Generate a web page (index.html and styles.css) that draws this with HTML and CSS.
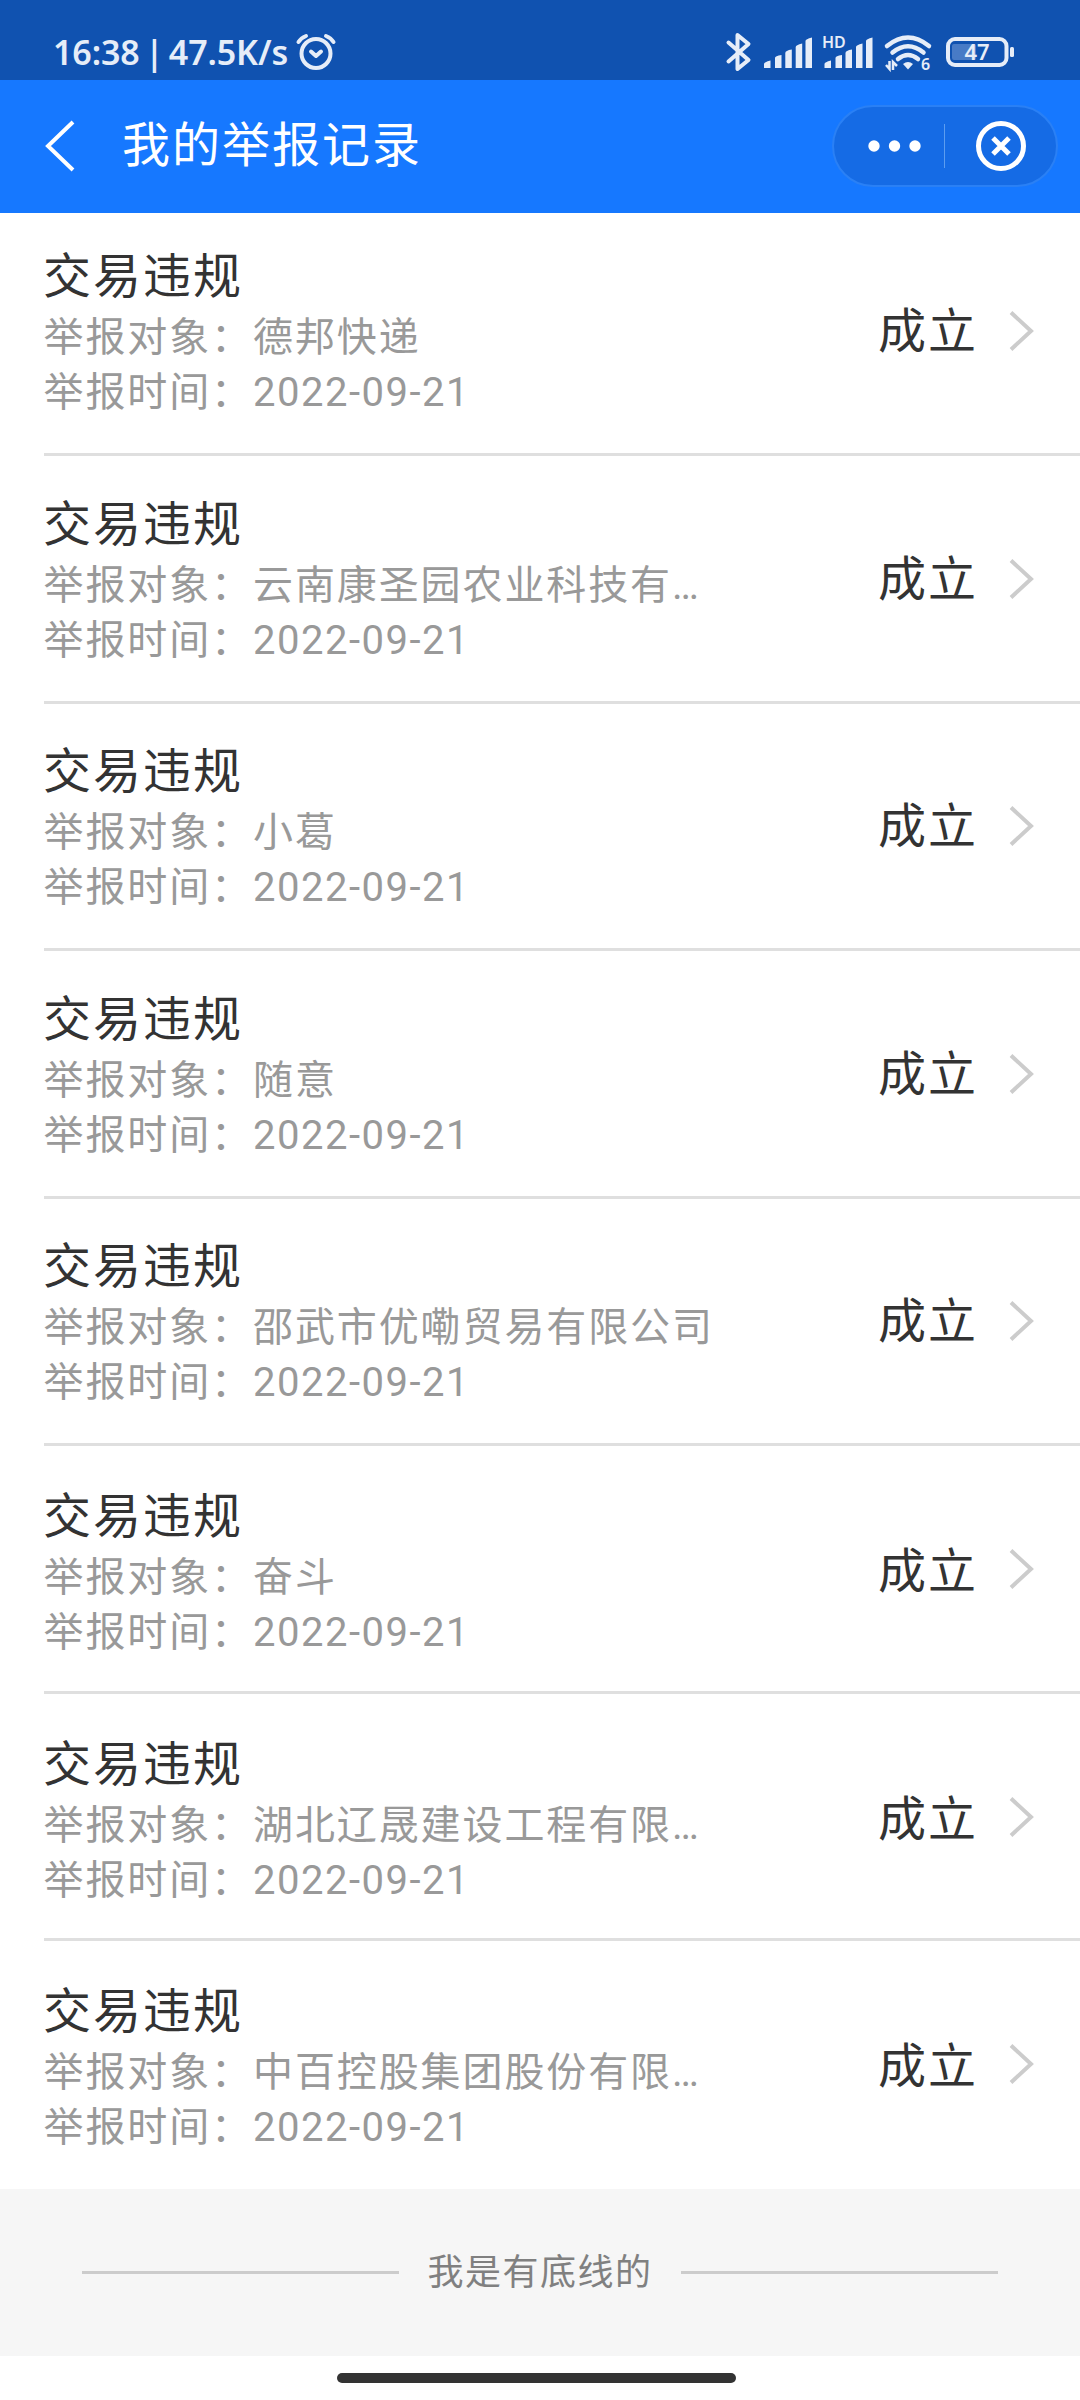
FILE: index.html
```html
<!DOCTYPE html>
<html lang="zh-CN">
<head>
    <meta charset="UTF-8">
    <meta name="viewport" content="width=device-width, initial-scale=1.0">
    <title>我的举报记录</title>
    <link rel="stylesheet" href="styles.css">
</head>
<body>
    <div class="status-bar">
        <span class="clock">16:38 | 47.5K/s</span>
        <svg class="alarm" width="40" height="38" viewBox="0 0 40 38">
            <circle cx="20" cy="20.5" r="14.5"/>
            <path d="M2.5 9 Q5 5 10 3M30 3 Q35 5 37.500 9M15 18.500l5 4.500 5-4.500"/>
        </svg>
        <div class="status-icons">
            <svg class="bluetooth" width="25" height="40" viewBox="0 0 25 40">
                <path d="M2.500 10.500L22.500 28 11.500 37V3L22.500 12 2.500 29.500"/>
            </svg>
            <svg class="signal" width="48" height="32" viewBox="0 0 48 32">
                <path d="M0 31V27Q0 25 6.500 23.500V31zM11 31V21Q11 19 17.500 18V31zM21.300 31V16Q21.300 13.500 27.800 12.500V31zM31.700 31V10Q31.700 8 38.200 6.500V31zM41.500 31V4Q41.500 2 48 .5V31z"/>
            </svg>
            <svg class="signal signal-hd" width="51" height="34" viewBox="0 0 51 34">
                <text x="0" y="13">HD</text>
                <path d="M2.500 33V29Q2.500 27 9 25.500V33zM13.500 33V23Q13.500 21 20 20V33zM23.500 33V18Q23.500 15.500 30 14.500V33zM34 33V12Q34 10 40.500 8.500V33zM44 33V6Q44 4 50.500 2.500V33z"/>
            </svg>
            <svg class="wifi" width="48" height="38" viewBox="0 0 48 38">
                <path class="arc" d="M3 12Q24-5 45 12M8.500 18.500Q24 6 39.500 18.500M14 25Q24 17 34 25"/>
                <path d="M19 30q5-4 10 0l-5 5.500z"/>
                <path class="arrows" d="M2 31l3.500 4V27M9 36V28l4 4"/>
                <text x="37" y="35.500">6</text>
            </svg>
            <svg class="battery" width="68" height="30" viewBox="0 0 68 30">
                <rect class="charge" x="6" y="7" width="24" height="16" rx="2"/>
                <rect class="case" x="2" y="2" width="58.500" height="26" rx="7"/>
                <rect x="64" y="10" width="4" height="10" rx="1.500"/>
                <text x="18.500" y="23.300">47</text>
            </svg>
        </div>
    </div>

    <div class="nav">
        <svg class="back" width="32" height="50" viewBox="0 0 32 50">
            <path d="M29 1L4 25 29 49"/>
        </svg>
        <h1>我的举报记录</h1>
        <div class="capsule">
            <svg class="more" width="54" height="12" viewBox="0 0 54 12">
                <circle cx="6" cy="6" r="5.700"/>
                <circle cx="26.500" cy="6" r="5.700"/>
                <circle cx="47" cy="6" r="5.700"/>
            </svg>
            <span class="split"></span>
            <svg class="close" width="50" height="50" viewBox="0 0 50 50">
                <circle cx="25" cy="25" r="22.500"/>
                <path d="M17 17l16 16M33 17L17 33"/>
            </svg>
        </div>
    </div>

    <div class="records">
        <div class="record">
            <div class="info">
                <h2>交易违规</h2>
                <p>举报对象：德邦快递</p>
                <p>举报时间：<span class="date">2022-09-21</span></p>
            </div>
            <span class="state">成立</span>
            <svg class="arrow" width="26" height="42" viewBox="0 0 26 42"><path d="M2 2.500L22 21 2 39.500"/></svg>
        </div>
        <div class="record">
            <div class="info">
                <h2>交易违规</h2>
                <p>举报对象：云南康圣园农业科技有…</p>
                <p>举报时间：<span class="date">2022-09-21</span></p>
            </div>
            <span class="state">成立</span>
            <svg class="arrow" width="26" height="42" viewBox="0 0 26 42"><path d="M2 2.500L22 21 2 39.500"/></svg>
        </div>
        <div class="record">
            <div class="info">
                <h2>交易违规</h2>
                <p>举报对象：小葛</p>
                <p>举报时间：<span class="date">2022-09-21</span></p>
            </div>
            <span class="state">成立</span>
            <svg class="arrow" width="26" height="42" viewBox="0 0 26 42"><path d="M2 2.500L22 21 2 39.500"/></svg>
        </div>
        <div class="record">
            <div class="info">
                <h2>交易违规</h2>
                <p>举报对象：随意</p>
                <p>举报时间：<span class="date">2022-09-21</span></p>
            </div>
            <span class="state">成立</span>
            <svg class="arrow" width="26" height="42" viewBox="0 0 26 42"><path d="M2 2.500L22 21 2 39.500"/></svg>
        </div>
        <div class="record">
            <div class="info">
                <h2>交易违规</h2>
                <p>举报对象：邵武市优嘞贸易有限公司</p>
                <p>举报时间：<span class="date">2022-09-21</span></p>
            </div>
            <span class="state">成立</span>
            <svg class="arrow" width="26" height="42" viewBox="0 0 26 42"><path d="M2 2.500L22 21 2 39.500"/></svg>
        </div>
        <div class="record">
            <div class="info">
                <h2>交易违规</h2>
                <p>举报对象：奋斗</p>
                <p>举报时间：<span class="date">2022-09-21</span></p>
            </div>
            <span class="state">成立</span>
            <svg class="arrow" width="26" height="42" viewBox="0 0 26 42"><path d="M2 2.500L22 21 2 39.500"/></svg>
        </div>
        <div class="record">
            <div class="info">
                <h2>交易违规</h2>
                <p>举报对象：湖北辽晟建设工程有限…</p>
                <p>举报时间：<span class="date">2022-09-21</span></p>
            </div>
            <span class="state">成立</span>
            <svg class="arrow" width="26" height="42" viewBox="0 0 26 42"><path d="M2 2.500L22 21 2 39.500"/></svg>
        </div>
        <div class="record">
            <div class="info">
                <h2>交易违规</h2>
                <p>举报对象：中百控股集团股份有限…</p>
                <p>举报时间：<span class="date">2022-09-21</span></p>
            </div>
            <span class="state">成立</span>
            <svg class="arrow" width="26" height="42" viewBox="0 0 26 42"><path d="M2 2.500L22 21 2 39.500"/></svg>
        </div>
    </div>

    <div class="list-end"><span>我是有底线的</span></div>
    <div class="home-bar"></div>
</body>
</html>
```
FILE: styles.css
```css
* {
    box-sizing: border-box;
}
body {
    margin: 0;
    width: 1080px;
    height: 2400px;
    background-color: #fff;
    font-family: Roboto, "Noto Sans CJK SC", sans-serif;
    overflow: hidden;
}
h1, h2, p {
    margin: 0;
    font-weight: normal;
}
svg {
    display: block;
    flex: none;
    overflow: visible;
    fill: none;
    stroke-width: 4;
}

/* status bar */
.status-bar {
    display: flex;
    align-items: flex-start;
    height: 80px;
    padding-left: 53px;
    background-color: #1052b0;
    color: #e6edf8;
}
.clock {
    width: 243px;
    margin-top: 31px;
    font: 600 34px/42px "Noto Sans", sans-serif;
    letter-spacing: -0.1px;
    word-spacing: -3.5px;
    white-space: pre;
}
.alarm {
    margin-top: 33px;
    stroke: #e6edf8;
    stroke-linecap: round;
    stroke-linejoin: round;
}
.status-icons {
    display: flex;
    align-items: flex-start;
    margin-left: auto;
    padding-right: 66px;
}
.status-icons text {
    font-family: "Noto Sans", sans-serif;
    font-weight: 600;
    stroke: none;
}
.status-icons svg {
    fill: #e6edf8;
}
.status-icons .bluetooth {
    margin-top: 32px;
    fill: none;
    stroke: #e6edf8;
    stroke-linecap: round;
    stroke-linejoin: round;
}
.signal {
    margin: 37px 0 0 13px;
}
.signal-hd {
    margin: 35px 0 0 10px;
    font-size: 16px;
}
.wifi {
    margin: 34px 0 0 11px;
    font-size: 16px;
}
.wifi .arc {
    fill: none;
    stroke: #e6edf8;
    stroke-width: 4.5;
    stroke-linecap: round;
}
.wifi .arrows {
    fill: none;
    stroke: #e6edf8;
    stroke-width: 2.5;
}
.battery {
    margin: 37px 0 0 14px;
    font-size: 22px;
}
.battery .case {
    fill: none;
    stroke: #e6edf8;
}
.battery .charge {
    fill: #487bc6;
}

/* title bar */
.nav {
    display: flex;
    align-items: center;
    height: 133px;
    padding: 0 22px 2px 44px;
    background-color: #1678ff;
    color: #fff;
}
.back {
    stroke: #fff;
}
.nav h1 {
    margin-left: 46px;
    font-size: 48px;
    line-height: 70px;
    letter-spacing: 2px;
}
.capsule {
    display: flex;
    align-items: center;
    width: 226px;
    height: 82px;
    margin-left: auto;
    padding-left: 34px;
    border: 2px solid #2a80f5;
    border-radius: 41px;
    background-color: #156be5;
}
.more {
    fill: #fff;
}
.split {
    width: 1px;
    height: 44px;
    margin: 0 31px 0 22px;
    background-color: #5c9df0;
}
.close {
    stroke: #fff;
    stroke-width: 5;
}

/* records */
.record {
    display: flex;
    height: 247.5px;
    margin-left: 44px;
    padding-top: 36.5px;
    border-bottom: 3px solid #dfdfdf;
}
.record:first-child {
    height: 243px;
    padding-top: 32px;
}
.record:nth-child(n+6) {
    padding-top: 39px;
}
.record:last-child {
    border-bottom: none;
}
.info {
    width: 834px;
}
.info h2 {
    margin: 0 0 1px -1px;
    font-size: 48px;
    line-height: 64px;
    letter-spacing: 2px;
    color: #333;
}
.info p {
    margin-left: -0.5px;
    font-size: 40px;
    line-height: 55px;
    letter-spacing: 1.9px;
    color: #999;
}
.info .date {
    letter-spacing: 1.5px;
}
.state {
    width: 131px;
    margin-top: 55px;
    font-size: 48px;
    line-height: 64px;
    letter-spacing: 2px;
    color: #333;
}
.arrow {
    margin-top: 65px;
    stroke: #ccc;
}
.record:nth-child(n+6) .arrow {
    margin-top: 63px;
}

/* end of list */
.list-end {
    display: flex;
    align-items: center;
    justify-content: space-between;
    height: 167px;
    padding: 0 82px;
    background-color: #f6f6f6;
    font-size: 36px;
    letter-spacing: 1.5px;
    color: #808080;
}
.list-end::before, .list-end::after {
    content: "";
    width: 317px;
    height: 3px;
    background-color: #ccc;
}
.list-end span {
    margin-bottom: 6px;
}
.home-bar {
    width: 399px;
    height: 10px;
    margin: 17px 0 0 337px;
    border-radius: 5px;
    background-color: #333;
}
```
